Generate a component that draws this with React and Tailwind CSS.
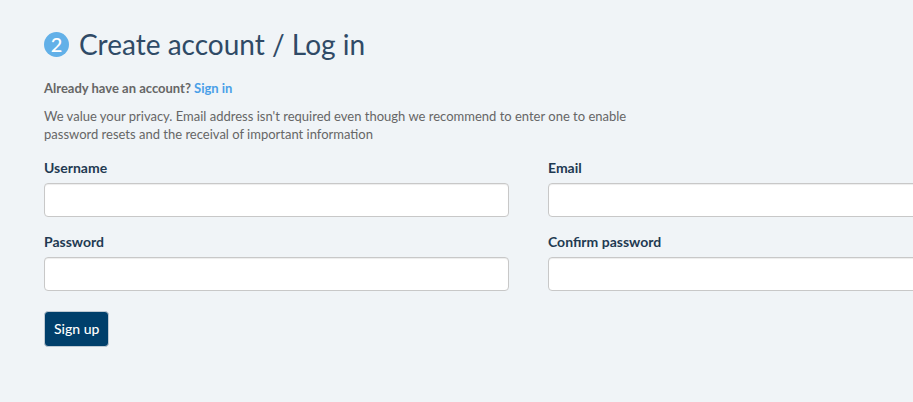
function Field({ id, label, type = 'text', autoComplete }) {
  return (
    <div className="flex flex-col gap-[5px]">
      <label htmlFor={id} className="text-[14px] leading-5 font-bold text-[#1f3a52]">{label}</label>
      <input
        id={id}
        name={id}
        type={type}
        autoComplete={autoComplete}
        className="h-[34px] w-full rounded border border-[#c8c8c8] bg-white px-3 text-sm text-[#555555] shadow-[inset_0_1px_1px_rgba(0,0,0,0.075)] outline-none focus:border-[#66afe9]"
      />
    </div>
  )
}

export default function App() {
  return (
    <main className="min-h-screen overflow-x-hidden bg-[#f0f4f7] pt-7 pb-14 pl-11 font-['Lato',sans-serif] text-[#666666]">
      <h1 className="flex items-center gap-2.5 text-[28px] leading-[33px] text-[#2f4a66]">
        <span className="flex size-[25px] items-center justify-center rounded-full bg-[#62b0e8] pb-0.5 text-[20px] leading-none font-medium text-white">2</span>
        Create account / Log in
      </h1>

      <p className="mt-[17px] text-[13px] leading-5 font-bold">
        Already have an account? <a href="#sign-in" className="text-[#4a9fe8]">Sign in</a>
      </p>
      <p className="mt-[9px] max-w-[600px] text-[13px] leading-[18px]">
        We value your privacy. Email address isn't required even though we recommend to enter one to enable password resets and the receival of important information
      </p>

      <form className="mt-[15px]" onSubmit={(e) => e.preventDefault()}>
        {/* the two columns run past the right edge of the panel */}
        <div className="-mr-[100px] grid grid-cols-2 gap-x-[39px] gap-y-[15px]">
          <Field id="username" label="Username" autoComplete="username" />
          <Field id="email" label="Email" type="email" autoComplete="email" />
          <Field id="password" label="Password" type="password" autoComplete="new-password" />
          <Field id="confirm" label="Confirm password" type="password" autoComplete="new-password" />
        </div>
        <button type="submit" className="mt-5 h-[36px] rounded border border-[#c0cad3] bg-[#003f6b] px-[9px] text-[14px] leading-5 font-medium text-white">
          Sign up
        </button>
      </form>
    </main>
  )
}
